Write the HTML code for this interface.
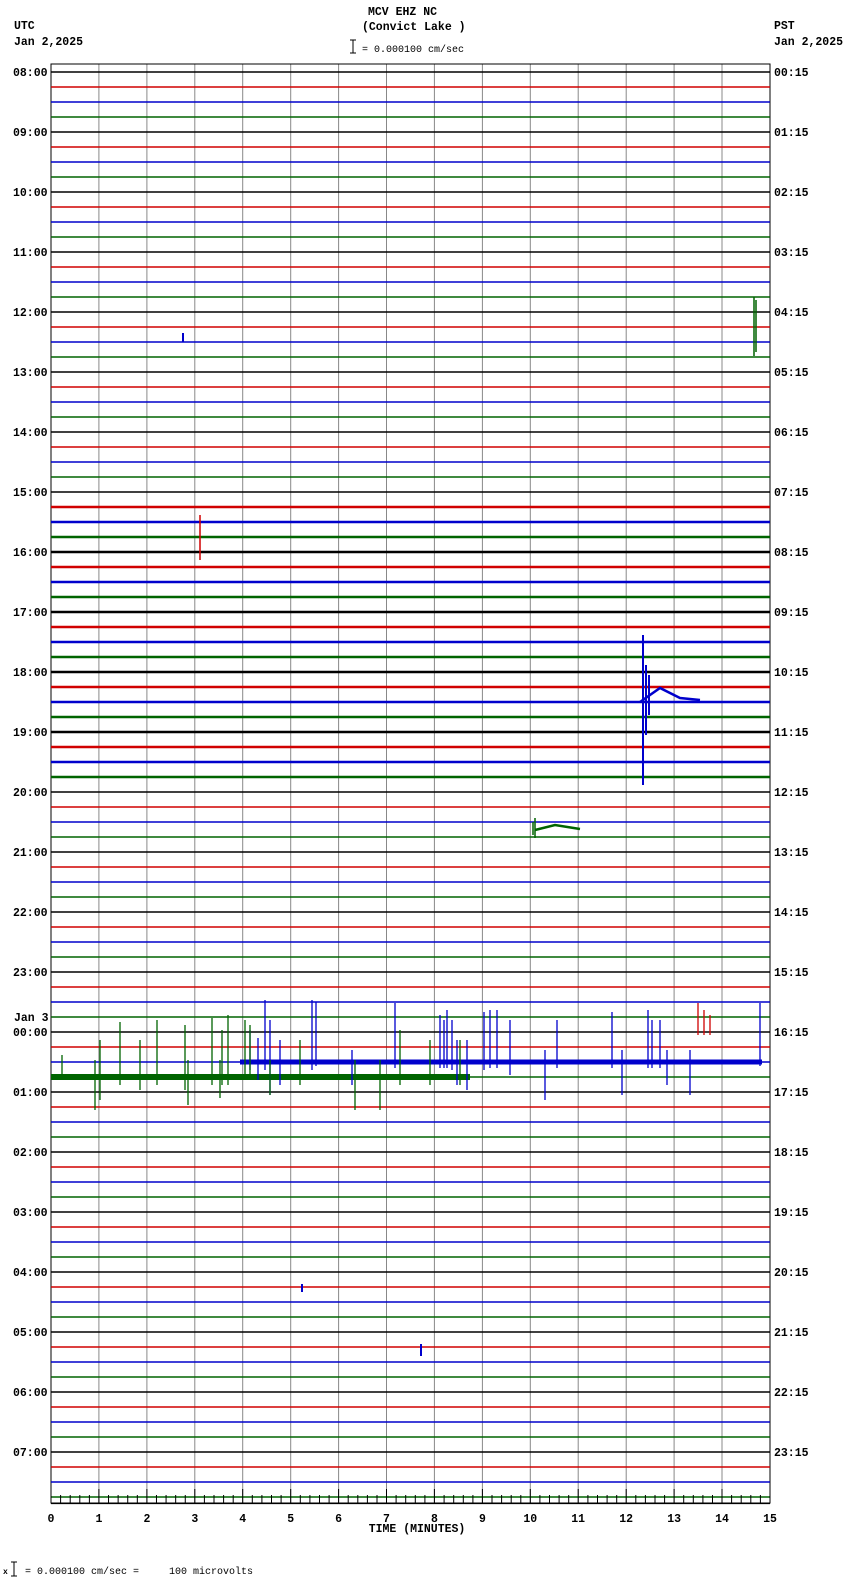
<!DOCTYPE html>
<html><head><meta charset="utf-8"><style>
html,body{margin:0;padding:0;background:#fff;width:850px;height:1584px;overflow:hidden}
svg{display:block}
text{font-family:"Liberation Mono",monospace;font-size:11.5px;font-weight:bold;fill:#000}
</style></head><body>
<svg width="850" height="1584" viewBox="0 0 850 1584" xmlns="http://www.w3.org/2000/svg">
<defs>
<g id="h">
<line x1="51" x2="770" y1="0" y2="0" stroke="#000" stroke-width="1.6"/>
<line x1="51" x2="770" y1="15" y2="15" stroke="#d00000" stroke-width="1.6"/>
<line x1="51" x2="770" y1="30" y2="30" stroke="#0000cc" stroke-width="1.6"/>
<line x1="51" x2="770" y1="45" y2="45" stroke="#006400" stroke-width="1.6"/>
</g>
<g id="hb">
<line x1="51" x2="770" y1="0" y2="0" stroke="#000" stroke-width="2.6"/>
<line x1="51" x2="770" y1="15" y2="15" stroke="#d00000" stroke-width="2.6"/>
<line x1="51" x2="770" y1="30" y2="30" stroke="#0000cc" stroke-width="2.6"/>
<line x1="51" x2="770" y1="45" y2="45" stroke="#006400" stroke-width="2.6"/>
</g>
<path id="tk" stroke="#000" stroke-width="1" fill="none" d="M60.6 1495V1503M70.2 1495V1503M79.8 1495V1503M89.4 1495V1503"/>
</defs>
<text x="14" y="29">UTC</text>
<text x="14" y="45">Jan 2,2025</text>
<text x="774" y="29">PST</text>
<text x="774" y="45">Jan 2,2025</text>
<text x="368" y="15">MCV EHZ NC</text>
<text x="362" y="30">(Convict Lake )</text>
<path d="M353 40V53M350 40H356M350 53H356" stroke="#000" stroke-width="1" fill="none"/>
<text x="362" y="52" style="font-weight:normal;font-size:10px">= 0.000100 cm/sec</text>

<g stroke="#888" stroke-width="1">
<line x1="98.9" x2="98.9" y1="64" y2="1503"/><line x1="146.9" x2="146.9" y1="64" y2="1503"/><line x1="194.8" x2="194.8" y1="64" y2="1503"/><line x1="242.7" x2="242.7" y1="64" y2="1503"/><line x1="290.7" x2="290.7" y1="64" y2="1503"/><line x1="338.6" x2="338.6" y1="64" y2="1503"/><line x1="386.5" x2="386.5" y1="64" y2="1503"/><line x1="434.4" x2="434.4" y1="64" y2="1503"/><line x1="482.4" x2="482.4" y1="64" y2="1503"/><line x1="530.3" x2="530.3" y1="64" y2="1503"/><line x1="578.2" x2="578.2" y1="64" y2="1503"/><line x1="626.2" x2="626.2" y1="64" y2="1503"/><line x1="674.1" x2="674.1" y1="64" y2="1503"/><line x1="722" x2="722" y1="64" y2="1503"/>
</g>
<rect x="51" y="64" width="719" height="1439" fill="none" stroke="#000" stroke-width="1"/>

<use href="#h" y="72"/><use href="#h" y="132"/><use href="#h" y="192"/><use href="#h" y="252"/><use href="#h" y="312"/><use href="#h" y="372"/><use href="#h" y="432"/>
<use href="#h" y="492"/>
<use href="#hb" y="552"/><use href="#hb" y="612"/><use href="#hb" y="672"/><use href="#hb" y="732"/>
<use href="#h" y="792"/><use href="#h" y="852"/><use href="#h" y="912"/><use href="#h" y="972"/><use href="#h" y="1032"/><use href="#h" y="1092"/><use href="#h" y="1152"/><use href="#h" y="1212"/><use href="#h" y="1272"/><use href="#h" y="1332"/><use href="#h" y="1392"/><use href="#h" y="1452"/>
<g stroke-width="2.6"><line x1="51" x2="770" y1="507" y2="507" stroke="#d00000"/><line x1="51" x2="770" y1="522" y2="522" stroke="#0000cc"/><line x1="51" x2="770" y1="537" y2="537" stroke="#006400"/></g>

<path d="M754 297V356M756 300V352" stroke="#006400" stroke-width="1.5"/>
<path d="M183 333V342" stroke="#0000cc" stroke-width="2"/>
<path d="M200 515V560" stroke="#d00000" stroke-width="1.5"/>
<path d="M643 635V785M646 665V735M649 675V715" stroke="#0000cc" stroke-width="2"/>
<path d="M640 702L660 688L680 698L700 700" stroke="#0000cc" stroke-width="2.5" fill="none"/>
<path d="M535 818V838M533 822V835" stroke="#006400" stroke-width="1.5"/>
<path d="M535 830L555 825L580 829" stroke="#006400" stroke-width="2.5" fill="none"/>
<path d="M302 1284V1292" stroke="#0000cc" stroke-width="2"/>
<path d="M421 1344V1356" stroke="#0000cc" stroke-width="2"/>

<path d="M240 1062H762" stroke="#0000cc" stroke-width="5"/>
<path d="M51 1077H470" stroke="#006400" stroke-width="6"/>
<path stroke="#0000cc" stroke-width="1.3" fill="none" d="M265 1000V1070M270 1020V1095M280 1040V1085M312 1000V1070M316 1002V1066M352 1050V1085M395 1003V1068M440 1015V1068M444 1020V1068M447 1010V1068M452 1020V1070M457 1040V1085M467 1040V1090M484 1012V1070M490 1010V1068M497 1010V1068M510 1020V1075M545 1050V1100M557 1020V1068M612 1012V1068M622 1050V1095M648 1010V1068M652 1020V1068M660 1020V1068M667 1050V1085M690 1050V1095M760 1003V1066M250 1030V1070M258 1038V1080"/>
<path stroke="#006400" stroke-width="1.3" fill="none" d="M95 1060V1110M100 1040V1100M120 1022V1085M157 1020V1085M185 1025V1090M188 1060V1105M212 1018V1085M220 1060V1098M222 1030V1085M228 1015V1085M245 1020V1080M250 1025V1080M270 1060V1095M300 1040V1085M355 1060V1110M380 1060V1110M400 1030V1085M430 1040V1085M460 1040V1085M140 1040V1090M62 1055V1080"/>
<path d="M698 1003V1035M704 1010V1035M710 1015V1035" stroke="#d00000" stroke-width="1.3"/>

<g>
<text x="13" y="76">08:00</text><text x="13" y="136">09:00</text><text x="13" y="196">10:00</text><text x="13" y="256">11:00</text><text x="13" y="316">12:00</text><text x="13" y="376">13:00</text><text x="13" y="436">14:00</text><text x="13" y="496">15:00</text><text x="13" y="556">16:00</text><text x="13" y="616">17:00</text><text x="13" y="676">18:00</text><text x="13" y="736">19:00</text><text x="13" y="796">20:00</text><text x="13" y="856">21:00</text><text x="13" y="916">22:00</text><text x="13" y="976">23:00</text>
<text x="14" y="1021">Jan 3</text><text x="13" y="1036">00:00</text><text x="13" y="1096">01:00</text><text x="13" y="1156">02:00</text><text x="13" y="1216">03:00</text><text x="13" y="1276">04:00</text><text x="13" y="1336">05:00</text><text x="13" y="1396">06:00</text><text x="13" y="1456">07:00</text>
</g>
<g>
<text x="774" y="76">00:15</text><text x="774" y="136">01:15</text><text x="774" y="196">02:15</text><text x="774" y="256">03:15</text><text x="774" y="316">04:15</text><text x="774" y="376">05:15</text><text x="774" y="436">06:15</text><text x="774" y="496">07:15</text><text x="774" y="556">08:15</text><text x="774" y="616">09:15</text><text x="774" y="676">10:15</text><text x="774" y="736">11:15</text><text x="774" y="796">12:15</text><text x="774" y="856">13:15</text><text x="774" y="916">14:15</text><text x="774" y="976">15:15</text><text x="774" y="1036">16:15</text><text x="774" y="1096">17:15</text><text x="774" y="1156">18:15</text><text x="774" y="1216">19:15</text><text x="774" y="1276">20:15</text><text x="774" y="1336">21:15</text><text x="774" y="1396">22:15</text><text x="774" y="1456">23:15</text>
</g>

<line x1="51" x2="770" y1="1503.5" y2="1503.5" stroke="#000" stroke-width="1.2"/>
<path stroke="#000" stroke-width="1" d="M51 1489V1503M98.9 1489V1503M146.9 1489V1503M194.8 1489V1503M242.7 1489V1503M290.7 1489V1503M338.6 1489V1503M386.5 1489V1503M434.4 1489V1503M482.4 1489V1503M530.3 1489V1503M578.2 1489V1503M626.2 1489V1503M674.1 1489V1503M722 1489V1503M770 1489V1503"/>
<use href="#tk"/><use href="#tk" x="47.93"/><use href="#tk" x="95.87"/><use href="#tk" x="143.8"/><use href="#tk" x="191.7"/><use href="#tk" x="239.7"/><use href="#tk" x="287.6"/><use href="#tk" x="335.5"/><use href="#tk" x="383.5"/><use href="#tk" x="431.4"/><use href="#tk" x="479.3"/><use href="#tk" x="527.3"/><use href="#tk" x="575.2"/><use href="#tk" x="623.1"/><use href="#tk" x="671"/>
<g style="font-size:13px" text-anchor="middle">
<text x="51" y="1522">0</text><text x="98.9" y="1522">1</text><text x="146.9" y="1522">2</text><text x="194.8" y="1522">3</text><text x="242.7" y="1522">4</text><text x="290.7" y="1522">5</text><text x="338.6" y="1522">6</text><text x="386.5" y="1522">7</text><text x="434.4" y="1522">8</text><text x="482.4" y="1522">9</text><text x="530.3" y="1522">10</text><text x="578.2" y="1522">11</text><text x="626.2" y="1522">12</text><text x="674.1" y="1522">13</text><text x="722" y="1522">14</text><text x="770" y="1522">15</text>
</g>
<text x="417" y="1532" text-anchor="middle">TIME (MINUTES)</text>

<text x="3" y="1574" style="font-size:8px">x</text>
<path d="M14 1562V1576M11 1562H17M11 1576H17" stroke="#000" stroke-width="1" fill="none"/>
<text x="25" y="1574" style="font-weight:normal;font-size:10px" xml:space="preserve">= 0.000100 cm/sec =     100 microvolts</text>
</svg>
</body></html>
